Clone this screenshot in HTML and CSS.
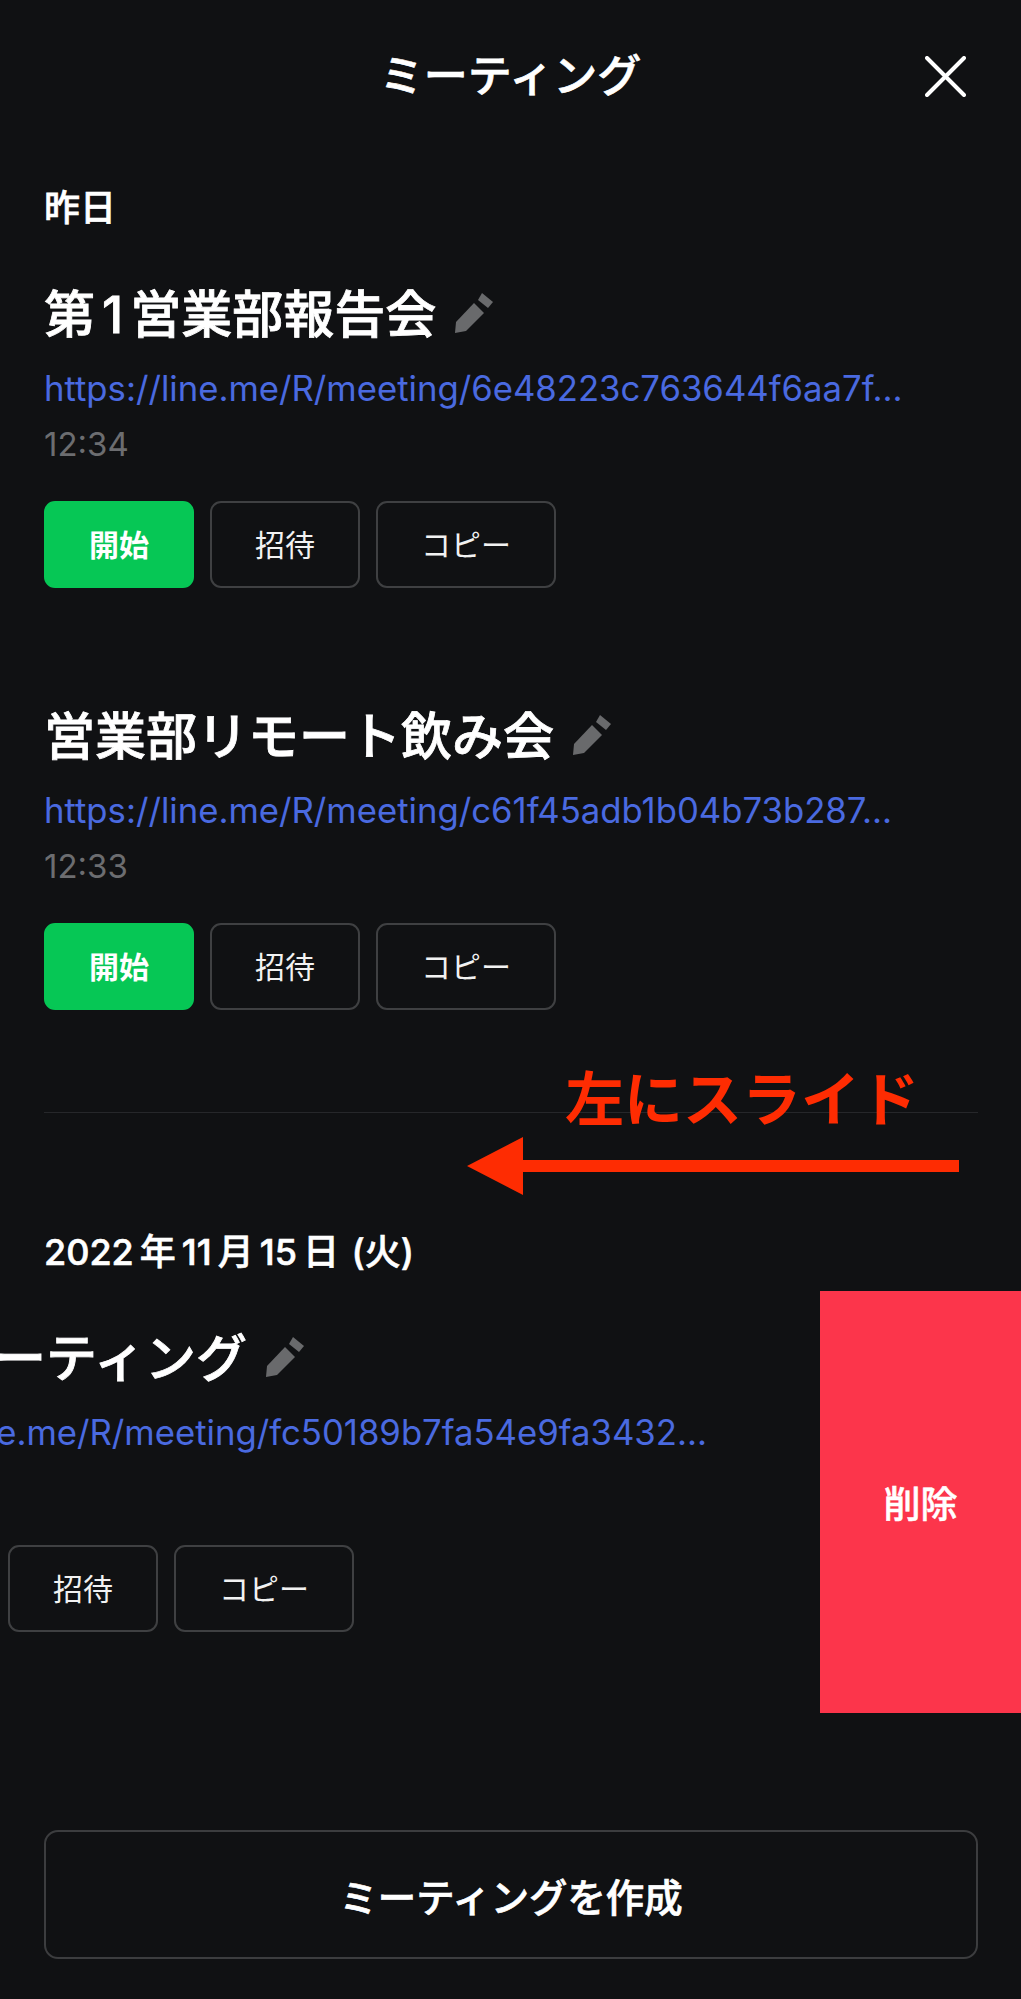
FILE: index.html
```html
<!DOCTYPE html>
<html lang="ja">
<head>
<meta charset="utf-8">
<title>ミーティング</title>
<link rel="stylesheet" href="styles.css">
</head>
<body>
<main class="app">
  <header class="header">
    <span></span>
    <h1 class="header-title">ミーティング</h1>
    <button class="close" aria-label="閉じる">
      <svg class="close-icon" viewBox="0 0 41 41"><path d="M2 2 39 39M39 2 2 39"/></svg>
    </button>
  </header>

  <h2 class="day">昨日</h2>

  <article class="item">
    <div class="item-body">
      <div class="item-title"><span>第<span class="num">1</span>営業部報告会</span>
        <svg class="pencil" viewBox="0 0 38 40"><path d="M0 40 1 29 19 10 29 20 11 38Z"/><path d="M27 0 38 9 33 15 23 7Z"/></svg>
      </div>
      <a class="item-url">https://line.me/R/meeting/6e48223c763644f6aa7f...</a>
      <div class="item-time">12:34</div>
      <div class="actions">
        <button class="btn btn-start">開始</button>
        <button class="btn btn-invite">招待</button>
        <button class="btn btn-copy">コピー</button>
      </div>
    </div>
  </article>

  <article class="item">
    <div class="item-body">
      <div class="item-title"><span>営業部リモート飲み会</span>
        <svg class="pencil" viewBox="0 0 38 40"><path d="M0 40 1 29 19 10 29 20 11 38Z"/><path d="M27 0 38 9 33 15 23 7Z"/></svg>
      </div>
      <a class="item-url">https://line.me/R/meeting/c61f45adb1b04b73b287...</a>
      <div class="item-time">12:33</div>
      <div class="actions">
        <button class="btn btn-start">開始</button>
        <button class="btn btn-invite">招待</button>
        <button class="btn btn-copy">コピー</button>
      </div>
    </div>
  </article>

  <hr class="divider">

  <h2 class="day">2022<span class="date-unit">年</span>11<span class="date-unit">月</span>15<span class="date-unit date-end">日</span> (火)</h2>

  <article class="item item-swiped">
    <div class="item-body">
      <div class="item-title"><span>定例ミーティング</span>
        <svg class="pencil" viewBox="0 0 38 40"><path d="M0 40 1 29 19 10 29 20 11 38Z"/><path d="M27 0 38 9 33 15 23 7Z"/></svg>
      </div>
      <a class="item-url">https://line.me/R/meeting/fc50189b7fa54e9fa3432...</a>
      <div class="item-time">12:30</div>
      <div class="actions">
        <button class="btn btn-start">開始</button>
        <button class="btn btn-invite">招待</button>
        <button class="btn btn-copy">コピー</button>
      </div>
    </div>
    <button class="delete">削除</button>
  </article>

  <button class="create">ミーティングを作成</button>

  <div class="note">左にスライド</div>
  <svg class="note-arrow" viewBox="0 0 492 58"><path d="M0 29 56 0V23H492V35H56V58Z"/></svg>
</main>
</body>
</html>
```

FILE: styles.css
```css
* { box-sizing: border-box; }
html, body { margin: 0; padding: 0; background: #101113; }
body { font-family: Inter, "Noto Sans CJK JP", sans-serif; color: #fff; }
button { font-family: inherit; color: inherit; background: none; border: 0; padding: 0; }

.app { position: relative; width: 1021px; height: 1999px; overflow: hidden; background: #101113; }

.header { display: grid; grid-template-columns: 1fr auto 1fr; align-items: center; height: 152px; margin-bottom: 36px; }
.header-title { margin: 0; font-size: 44px; line-height: 60px; font-weight: 500; -webkit-text-stroke: 0.7px #fff; }
.close { justify-self: end; display: flex; margin-right: 55px; }
.close-icon { width: 41px; height: 41px; fill: none; stroke: #fff; stroke-width: 4; stroke-linecap: round; }

.day { margin: 0 0 19px; padding-left: 44px; font-size: 36px; line-height: 40px; font-weight: 500; -webkit-text-stroke: 0.6px #fff; }
.date-unit { margin: 0 6px; }
.date-end { margin-right: 3px; }

.item { position: relative; height: 422px; }
.item-body { padding: 37px 0 81px 44px; }
.item-title { display: flex; align-items: center; gap: 19px; height: 60px; padding-bottom: 6px; font-size: 51px; font-weight: 500; -webkit-text-stroke: 0.8px #fff; white-space: nowrap; }
.num { margin: 0 7px; }
.pencil { width: 38px; height: 40px; fill: #696a6c; flex: none; margin-top: 4px; }
.item-url { display: block; margin-top: 24px; font-size: 34.7px; line-height: 40px; color: #4a6ae0; white-space: nowrap; }
.item-time { margin-top: 16px; font-size: 33px; line-height: 40px; color: #6c6d70; }
.actions { display: flex; gap: 16px; margin-top: 37px; }
.btn { height: 87px; padding-bottom: 3px; border: 2px solid #3f4042; border-radius: 11px; font-size: 30px; font-weight: 400; color: #f2f2f2; }
.btn-start { width: 150px; background: #06c755; border-color: #06c755; color: #fff; font-weight: 700; }
.btn-invite { width: 150px; }
.btn-copy { width: 180px; }

.item-swiped .item-body { transform: translateX(-202px); }
.delete { position: absolute; top: 0; right: 0; bottom: 0; width: 201px; background: #fc354b; font-size: 37px; font-weight: 500; -webkit-text-stroke: 0.5px #fff; }

.divider { height: 1px; margin: 21px 43px 119px 44px; border: 0; background: #26272a; }

.create { display: block; width: 934px; height: 129px; margin: 117px 0 0 44px; border: 2px solid #3c3d3f; border-radius: 14px; font-size: 38.4px; font-weight: 500; -webkit-text-stroke: 0.7px #fff; }

.note { position: absolute; left: 565px; top: 1063px; font-size: 59px; line-height: 74px; font-weight: 700; color: #fe2c02; white-space: nowrap; }
.note-arrow { position: absolute; left: 467px; top: 1137px; width: 492px; height: 58px; fill: #fe2c02; }
```
